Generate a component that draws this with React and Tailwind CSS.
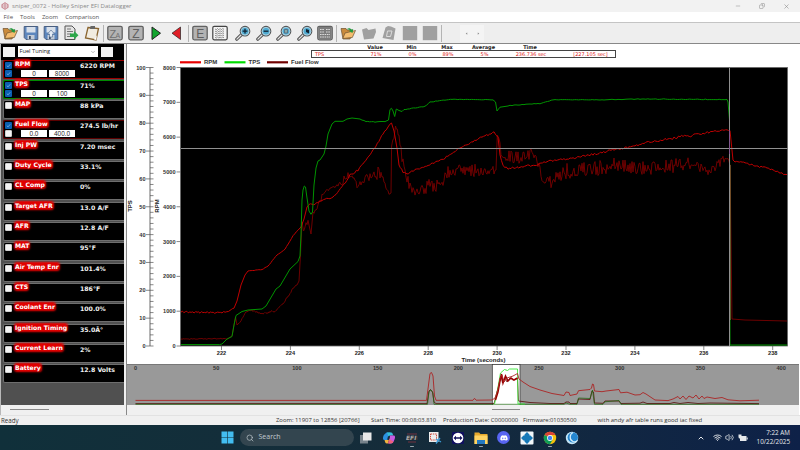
import { Search, ChevronDown, ChevronUp, Wifi, Volume2, Minus, Copy, X } from 'lucide-react';
import { FaDiscord } from 'react-icons/fa';

const channels = [
  { name: 'RPM', value: '6220 RPM', border: 'border-[#9c0000]', checks: [true, true], range: ['0', '8000'] },
  { name: 'TPS', value: '71%', border: 'border-[#008a00]', checks: [true, true], range: ['0', '100'] },
  { name: 'MAP', value: '88 kPa' },
  { name: 'Fuel Flow', value: '274.5 lb/hr', border: 'border-[#5c0000]', checks: [true, false], range: ['0.0', '400.0'] },
  { name: 'Inj PW', value: '7.20 msec' },
  { name: 'Duty Cycle', value: '33.1%' },
  { name: 'CL Comp', value: '0%' },
  { name: 'Target AFR', value: '13.0 A/F' },
  { name: 'AFR', value: '12.8 A/F' },
  { name: 'MAT', value: '95°F' },
  { name: 'Air Temp Enr', value: '101.4%' },
  { name: 'CTS', value: '186°F' },
  { name: 'Coolant Enr', value: '100.0%' },
  { name: 'Ignition Timing', value: '35.0Â°' },
  { name: 'Current Learn', value: '2%' },
  { name: 'Battery', value: '12.8 Volts' },
];

// [x, y, noise amplitude up to this point]
const tps = [
  [181, 344.6, 0], [219.5, 344.6, 0], [222, 344, 0], [227, 339, 0], [232, 336.5, 0], [234, 325, 0], [236, 315.5, 0],
  [242, 311.5, 0], [248, 310, 0], [262, 309, 0], [266, 306, 0], [276, 289, 0], [280, 286, 0], [290, 269, 0],
  [298, 261.5, 0], [300, 256, 0], [301, 235, 0], [302, 200, 0], [303, 190, 0], [304.3, 186, 0], [305.5, 187, 0],
  [307, 198, 0], [309, 211, 0], [311, 214.3, 0], [312.5, 212, 0], [314, 185, 0], [316, 168, 0], [318, 161, 0],
  [320, 160, 0], [324, 154, 0], [326, 146, 0], [328, 134, 0], [332, 124, 0], [335, 121.3, 0], [343, 121.3, 0],
  [347, 119, 0], [352, 118, 0], [360, 119, 0], [366, 121.5, 0.3], [375, 122, 0.3], [385, 121.5, 0.3], [388.5, 120, 0],
  [390, 109.5, 0], [391.5, 108.3, 0], [393, 111, 0], [394.7, 116.5, 0], [396.3, 109, 0], [399, 110.5, 0], [402, 111.5, 0],
  [404, 109.5, 0.3], [425, 106.5, 0.3], [430, 102, 0.2], [445, 100, 0.3], [452, 99.3, 0.2], [493, 99.8, 0.2],
  [495.5, 102, 0], [497, 111, 0], [500, 107, 0.2], [510, 105.5, 0.3], [540, 103.5, 0.3], [553, 99.8, 0.2],
  [600, 99.8, 0.2], [640, 99, 0.3], [727, 99.5, 0.3], [728, 102, 0], [729.5, 120, 0], [730, 345, 0], [787, 345, 0],
];

const rpm = [
  [181, 312, 0], [200, 312.5, 1], [222, 312.5, 1], [230, 311, 0.8], [234, 308, 0.5], [237, 301, 0], [241, 285, 0],
  [245, 275, 0], [248, 271, 0], [262, 269.5, 0.2], [268, 266, 0.2], [277, 255, 0.3], [285, 249, 0.3], [293, 236, 0.3],
  [298, 230, 0.3], [301, 227, 0], [304, 219, 0], [307, 207, 0], [309, 204.5, 0], [315, 204, 0.6], [322, 200, 0.6],
  [333, 197.5, 0.6], [342, 187, 0.6], [350, 175, 1], [358, 170, 1], [366, 160, 0.6], [376, 146, 0.6], [383, 134, 0.8],
  [388, 127, 0.8], [391.5, 122.5, 0.5], [394, 131, 0], [397, 148, 0], [399, 165, 0], [403, 172, 0.6], [407, 174, 0.6],
  [415, 170, 0.8], [431, 164, 0.8], [445, 158, 1], [458, 149, 0.8], [470, 143, 0.8], [482, 137, 0.8], [494, 132.5, 0.8],
  [498, 137, 0.5], [500, 155, 0], [503, 166, 1], [508, 168.5, 1], [520, 167, 1], [535, 165, 1], [550, 161, 1],
  [567, 159, 1], [590, 155, 1], [620, 149, 1.2], [650, 142, 1.1], [680, 137, 1.2], [700, 134, 1.6], [724, 129.5, 1],
  [730, 131, 0.5], [733, 160, 0], [735, 162, 0.5], [745, 162.5, 0.8], [752, 165, 1], [770, 169, 1], [785, 174.5, 0.8], [787, 174.5, 0],
];

const fuel = [
  [181, 339, 0], [228, 338.6, 0.4], [232, 336, 0.3], [235.5, 317, 0], [237, 325, 0], [241, 321, 0.5], [245, 313, 0.5],
  [250, 310, 0.5], [262, 314, 1], [275, 311, 1], [283, 304, 1], [292, 290, 1.2], [299, 282, 1], [300.5, 255, 0],
  [302, 222, 0], [303.5, 231, 0], [306, 221, 2], [309, 223, 3], [311, 234, 0], [313, 212, 0], [316, 210, 2], [320, 200, 3],
  [326, 190, 4], [336, 187, 1.5], [343, 182, 2], [350, 174, 5], [357, 185, 3], [368, 176, 4], [375, 175, 5], [380, 172, 7],
  [386, 186, 3], [389, 194, 2], [391, 193, 0], [391.6, 146, 0], [394, 138, 4], [395.5, 126, 0], [399, 138, 4], [402, 158, 5],
  [406, 177, 5], [412, 188, 6], [419, 193, 6], [428, 186, 6], [442, 184, 7], [448, 172, 6], [465, 170, 6], [480, 171, 7],
  [496, 169, 5], [497.3, 135, 0], [500, 148, 6], [506, 156, 7], [515, 158, 7], [533, 155, 7], [537, 163, 5], [543, 178, 6],
  [550, 181, 6], [562, 176, 8], [567, 171, 8], [590, 170, 8], [615, 165, 8], [650, 169, 7], [680, 165, 7], [690, 163, 8],
  [708, 172, 5], [718, 164, 5], [726, 157, 5], [730, 163, 3], [732, 319, 0], [745, 320, 0], [787, 321, 0],
];

const overviewRpm = [
  [135.5, 400.4], [426.5, 400.4], [428.5, 385], [430, 373.5], [431.5, 372.5], [433, 376], [434.5, 396], [436, 400.3],
  [473, 400.3], [474.5, 398.3], [476, 400.2], [492, 400], [495, 398], [498, 389], [500, 378], [502, 375], [504, 382],
  [507, 378], [510, 377], [513, 376], [517.5, 373.5], [519, 379], [523, 382], [530, 386.5], [540, 390], [552, 393.5],
  [561, 395], [564, 395.5], [566, 392], [569, 392.5], [570, 395.5], [577, 394], [578.5, 390.7], [590, 389.5],
  [591.5, 388], [592.5, 384], [593.5, 384.5], [594.5, 391], [602, 391.7], [606, 391], [619, 389.5], [620.5, 392.8],
  [627, 392.2], [635, 395], [640, 394.7], [643, 392.5], [646, 394], [655, 400], [668, 400.6], [673, 399], [678, 396.5],
  [680, 399], [683, 396], [686, 399.5], [689, 396], [693, 398], [696, 395], [699, 399], [702, 396], [704, 398.500],
  [707, 397], [715, 398.500], [722, 397.500], [728, 399.800], [740, 400.800], [759, 400.200],
];

const overviewFuel = [
  [135.5, 403.6], [427, 403.6], [429, 391], [430.5, 389.5], [432.5, 392], [434, 402], [436, 403.6], [494, 403.6],
  [496, 396], [499, 384], [501, 376], [502.5, 383], [505, 378], [507, 382], [510, 378], [513, 380], [517.5, 378.500],
  [518.5, 401], [530, 402.500], [550, 403.500], [564, 403.5], [566, 402], [569, 402], [570, 403.5], [577, 403.5],
  [578.5, 399], [590, 399.5], [592, 391], [593.5, 392], [594.5, 403], [603, 403.3], [605, 401], [619, 401],
  [621, 403.5], [640, 403.2], [643, 402], [647, 403.5], [670, 403.5], [674, 402.5], [680, 403.5], [688, 402.5],
  [698, 403.5], [710, 403], [759, 403.6],
];

const overviewTps = [
  [135.5, 404.3], [427.5, 404.3], [429, 391.5], [431, 390], [433, 393], [434, 404.3], [564, 404.3], [566, 403],
  [570, 404.3], [577, 404.3], [578.5, 398], [590, 398.500], [592.5, 390], [594.5, 404.3], [603, 404.3], [605, 401.800],
  [619, 400.500], [621, 404.3], [759, 404.3],
];

const toPath = (points) => 'M' + points.map(([x, y]) => `${x} ${y}`).join('L');

const noise = (n) => {
  const s = Math.sin(n * 127.1 + 11.7) * 43758.5453;
  return (s - Math.floor(s)) * 2 - 1;
};

const trace = (points, seed, step = 1) => {
  let d = `M${points[0][0]} ${points[0][1]}`;
  for (let i = 1; i < points.length; i++) {
    const [x0, y0] = points[i - 1];
    const [x1, y1, amp] = points[i];
    const count = amp ? Math.max(1, Math.round((x1 - x0) / step)) : 1;
    for (let k = 1; k <= count; k++) {
      const t = k / count;
      const x = x0 + (x1 - x0) * t;
      const y = y0 + (y1 - y0) * t + noise(x + seed) * amp;
      d += `L${x.toFixed(1)} ${y.toFixed(1)}`;
    }
  }
  return d;
};

const range = (n) => Array.from({ length: n }, (_, i) => i);

const Checkbox = ({ checked }) =>
  checked ? (
    <span className="flex size-[7px] items-center justify-center rounded-[1px] bg-[#0b5fb0]">
      <svg viewBox="0 0 6 6" className="size-[5px]" fill="none" stroke="#9cc8f0" strokeWidth="0.8">
        <path d="M1 3.2 2.5 4.6 5 1.6" />
      </svg>
    </span>
  ) : (
    <span className="size-[7px] rounded-[1px] border border-[#cfcfcf] bg-[#f4f4f4]" />
  );

const Channel = ({ name, value, border = 'border-[#6e6e6e]', checks = [false], range: limits }) => (
  <div className={`ml-[2px] mb-[1.33px] flex h-[19px] shrink-0 rounded-l-[2px] border border-r-0 bg-black pl-[1px] ${border}`}>
    <div className="flex w-[10px] flex-col gap-[1px] pt-[1px]">
      {checks.map((checked, i) => (
        <Checkbox key={i} checked={checked} />
      ))}
    </div>
    <div className="w-[65px]">
      <p className="h-[8px] whitespace-nowrap text-[6.1px] leading-[6px] font-bold text-white">
        <span className="rounded-[2px] bg-[#e00000] shadow-[0_0_2px_1px_#f00000]">{name}</span>
      </p>
      {limits && (
        <div className="flex gap-[2px] pl-[6px] pt-[1px] font-['Open_Sans',sans-serif] text-[6.3px] leading-[7px] text-[#222]">
          <span className="w-[26px] bg-white text-center">{limits[0]}</span>
          <span className="w-[26px] bg-white text-center">{limits[1]}</span>
        </div>
      )}
    </div>
    <span className="pt-[1px] whitespace-nowrap text-[6.2px] leading-[7px] font-bold text-[#f0f0f0]">{value}</span>
  </div>
);

const Tool = ({ children }) => (
  <span className="flex w-[20.4px] justify-center">
    <svg viewBox="0 0 16 16" className="size-[16px]" fill="none">
      {children}
    </svg>
  </span>
);

const Divider = () => <span className="mx-[1px] h-[17px] w-px bg-[#b4b4b4]" />;

const Folder = () => (
  <Tool>
    <path d="M1 3.5h5l1 1.5h5.500v3L10 14H3z" fill="#c98a3c" stroke="#6b5030" strokeWidth="0.7" />
    <path d="M2.800 13.500 5 8l10.500-2.500-3.200 7z" fill="#f4bd70" stroke="#6b5030" strokeWidth="0.7" />
    <path d="M6.500 4.500c2-2 4-1.500 5 .2l1.700-.7-.7 4-3.500-2 1.200-.6c-1-1-2.200-1.200-3.700-.9z" fill="#1f9a3d" />
  </Tool>
);

const Floppy = ({ up }) => (
  <Tool>
    <path d="M1.200 1.500h13.600v13H3L1.200 12.500z" fill="#5c86bd" stroke="#4a5f80" />
    <path d="M3.500 2h9v5.500h-9z" fill="#d8e0ea" />
    <path d="M4.500 10h7v4.500h-7z" fill="#c3cbd6" />
    <path d="M6 11h1.800v3H6z" fill="#44546c" />
    {up && <path d="M8 5 11.500 9H9.500v3h-3V9h-2z" fill="#e4ebf4" stroke="#5d7596" strokeWidth="0.7" />}
  </Tool>
);

const Gray = ({ children }) => (
  <Tool>
    <rect x="0.800" y="1.300" width="14.400" height="13.500" rx="1.500" fill="#b3b3b3" stroke="#626262" strokeWidth="1.300" />
    {children}
  </Tool>
);

const Zoom = ({ children }) => (
  <Tool>
    <path d="M6.600 9.500 1.800 14.200" stroke="#555" strokeWidth="3.200" strokeLinecap="round" />
    <path d="M6.300 9.800 1.900 14.100" stroke="#e4e4e4" strokeWidth="1.300" strokeLinecap="round" />
    <circle cx="10" cy="6.200" r="4.800" fill="#4ea9cf" stroke="#555" strokeWidth="1.100" />
    <circle cx="10" cy="6.200" r="3.900" stroke="#c5dbe5" strokeWidth="0.800" />
    {children}
  </Tool>
);

const Toolbar = () => (
  <div className="flex h-[21px] items-center border-t border-[#c4c4c4] bg-[#eeeeee]">
    <Folder />
    <Floppy />
    <Floppy up />
    <Tool>
      <path d="M2 1h7l3 3v10.500H2z" fill="#e4e4e4" stroke="#555" />
      <path d="M4 4h4M4 6.500h6M4 9h4M4 11.500h4" stroke="#777" />
      <path d="M7 8.500h4V6l4.500 4.200L11 14.500V12H7z" fill="#2da84c" />
    </Tool>
    <Tool>
      <path d="M4 2.500 14.500 3.500 12 15 1.500 13z" fill="#f1ece0" stroke="#8a6530" strokeWidth="1.300" />
      <path d="M6.500 1h4.500v3H6z" fill="#666" />
      <path d="M10 14.500 13 10l-.800 5z" fill="#fff" />
    </Tool>
    <Divider />
    <Gray>
      <text x="2.500" y="12.500" fontSize="11" fill="#707070" fontFamily="Liberation Sans">Z</text>
      <text x="8.500" y="12.500" fontSize="7" fill="#707070" fontFamily="Liberation Sans">A</text>
    </Gray>
    <Gray>
      <text x="4.300" y="12.500" fontSize="12" fill="#606060" fontFamily="Liberation Sans">Z</text>
    </Gray>
    <Tool>
      <path d="M4 2v12.500L12.500 8.200z" fill="#12a52f" stroke="#222" />
    </Tool>
    <Tool>
      <path d="M12.500 2v12.500L4 8.200z" fill="#e01f28" stroke="#222" strokeWidth="0.700" />
    </Tool>
    <Divider />
    <Gray>
      <text x="4.300" y="12.700" fontSize="12" fill="#606060" fontFamily="Liberation Sans">E</text>
    </Gray>
    <Tool>
      <rect x="0.800" y="1.300" width="14.400" height="13.500" rx="1.500" fill="#f4f4f4" stroke="#444" strokeWidth="1.200" />
      {range(5).map((i) => (
        <path key={i} d={`M3 ${3.8 + i * 2.1}l1.2 1 1.3-1.3 1.3 1.3 1.3-1.3 1.3 1.3 1.3-1.3 1.3 1`} stroke="#666" strokeWidth="0.7" />
      ))}
    </Tool>
    <span className="w-[3px]" />
    <Zoom>
      <path d="M10 3.800v4.800M7.600 6.200h4.800" stroke="#123" strokeWidth="1.300" />
    </Zoom>
    <Zoom>
      <path d="M7.600 6.200h4.800" stroke="#123" strokeWidth="1.300" />
    </Zoom>
    <Zoom>
      <path d="M8.500 4.500h3v3.500h-3z" fill="#8aa" stroke="#567" strokeWidth="0.800" />
    </Zoom>
    <Zoom>
      <path d="M9 4v3l3 1.500V5z" fill="#123" />
    </Zoom>
    <Gray>
      <path d="M1.500 2h13v12h-13z" fill="#7c7c7c" />
      <path d="M3 4.500h4M9 4.500h4M3 7h4M9 7h4M3 9.500h10M3 12h10" stroke="#ddd" strokeDasharray="1.600 0.700" />
    </Gray>
    <Divider />
    <Folder />
    <Tool>
      <path d="M1 4.500 5.500 3l2 2 7-1.500.500 3.500-2.500 6.500L3 14.500z" fill="#a0a0a0" />
    </Tool>
    <Tool>
      <path d="M4.500 2.500 7 1l3 .500 4.500 2L12.500 15 1.500 13z" fill="#a0a0a0" />
      <path d="M6.500 6h4.500l-1.500 5.500h-4z" stroke="#dcdcdc" />
    </Tool>
    <Tool>
      <path d="M0.800 1h14.400v14.200H0.800z" fill="#a0a0a0" />
    </Tool>
    <Tool>
      <path d="M0.800 1h14.400v14.200H0.800z" fill="#a0a0a0" />
    </Tool>
    <Divider />
    <span className="ml-[17px] flex h-[17px] w-[24px] items-center justify-around bg-[#f4f4f4]">
      <svg viewBox="0 0 4 4" className="size-[3px]"><path d="M3 .5v3L1 2z" fill="#888" /></svg>
      <svg viewBox="0 0 4 4" className="size-[3px]"><path d="M1 .5v3L3 2z" fill="#888" /></svg>
    </span>
  </div>
);

const Sidebar = () => (
  <aside className="flex w-[124px] shrink-0 flex-col overflow-hidden border-l border-[#b8b8b8] bg-[#505050] font-['DejaVu_Sans',sans-serif]">
    <div className="flex h-[15.500px] shrink-0 items-center bg-black pl-[2px]">
      <span className="h-[10px] w-[12px] bg-[#f2f2f2]" />
      <span className="ml-[2.500px] flex h-[11px] w-[80px] items-center justify-between bg-white px-[2px] font-['Open_Sans',sans-serif] text-[5.700px] text-[#222]">
        Fuel Tuning
        <ChevronDown size={6} color="#777" />
      </span>
      <span className="ml-[3.500px] h-[10px] w-[11.500px] bg-[#f2f2f2]" />
    </div>
    {channels.map((channel) => (
      <Channel key={channel.name} {...channel} />
    ))}
    <div className="flex-1" />
    <div className="h-[10px] bg-[#f0f0f0] pt-[4px] pl-[9px]">
      <div className="h-px w-[39px] bg-[#8a8a8a]" />
    </div>
  </aside>
);

const StatsTable = () => (
  <div className="ml-[184px] w-[305px] font-['DejaVu_Sans',sans-serif] text-[5px]">
    <div className="grid h-[6px] grid-cols-[40px_48px_25px_46px_27px_66px_53px] text-center leading-[6px] font-bold text-[#222]">
      <span />
      <span>Value</span>
      <span>Min</span>
      <span>Max</span>
      <span>Average</span>
      <span>Time</span>
    </div>
    <div className="grid h-[8px] grid-cols-[40px_48px_25px_46px_27px_66px_53px] border border-[#444] text-center leading-[6px] text-[#e02020]">
      <span className="pl-[3px] text-left">TPS</span>
      <span>71%</span>
      <span>0%</span>
      <span>89%</span>
      <span>5%</span>
      <span>236.736 sec</span>
      <span className="whitespace-nowrap">[227.105 sec]</span>
    </div>
  </div>
);

const legend = [
  { name: 'RPM', x: 180, color: '#e80000' },
  { name: 'TPS', x: 224.5, color: '#00dc00' },
  { name: 'Fuel Flow', x: 267, color: '#700000' },
];

const Chart = () => (
  <svg viewBox="127 59 672 305" className="h-[305px] w-[672px]" fill="none" fontFamily="Liberation Sans" fontWeight="bold">
    {legend.map((item) => (
      <g key={item.name}>
        <path d={`M${item.x} 62.3h21`} stroke={item.color} strokeWidth="2.2" />
        <text x={item.x + 24} y="64.300" fontSize="6" fill="#333">{item.name}</text>
      </g>
    ))}

    <path d="M150 67.500V346" stroke="#444" strokeWidth="0.800" />
    {range(51).map((i) => (
      <path key={i} d={i % 5 ? `M150 ${346 - i * 5.57}h3.5` : `M146 ${346 - i * 5.57}h7.5`} stroke="#555" strokeWidth="0.7" />
    ))}
    {range(11).map((i) => (
      <text key={i} x="145.500" y={348 - i * 27.85} fontSize="5.600" fill="#333" textAnchor="end">{i * 10}</text>
    ))}
    {range(9).map((i) => (
      <g key={i}>
        <path d={`M176.5 ${346 - i * 34.81}h4`} stroke="#555" strokeWidth="0.7" />
        <text x="175.500" y={348 - i * 34.81} fontSize="5.600" fill="#333" textAnchor="end">{i * 1000}</text>
      </g>
    ))}
    <text transform="translate(131.500 206) rotate(-90)" fontSize="6" fill="#111" textAnchor="middle">TPS</text>
    <text transform="translate(158.500 206) rotate(-90)" fontSize="6" fill="#111" textAnchor="middle">RPM</text>

    <rect x="180.500" y="67.500" width="607" height="278.500" fill="#000" stroke="#666" strokeWidth="0.800" />
    <path d={trace(fuel, 3)} stroke="#780000" strokeWidth="0.900" />
    <path d={trace(rpm, 9, 1.5)} stroke="#c00000" strokeWidth="1" />
    <path d={trace(tps, 5, 2)} stroke="#009400" strokeWidth="1" />
    <path d="M181 148.500h606.500" stroke="#909090" />
    <path d="M729.500 68v278" stroke="#909090" />
    <path d="M729.500 130v24" stroke="#804a90" strokeWidth="0.800" />
    <path d="M730.500 165v155" stroke="#8a7040" strokeWidth="0.600" />

    {range(9).map((i) => (
      <g key={i}>
        <path d={`M${221.5 + i * 68.9} 346v4`} stroke="#555" strokeWidth="0.7" />
        <text x={221.5 + i * 68.9} y="355" fontSize="5.600" fill="#222" textAnchor="middle">{222 + i * 2}</text>
      </g>
    ))}
    <text x="483.500" y="362.300" fontSize="6" fill="#222" textAnchor="middle">Time (seconds)</text>
  </svg>
);

const Overview = () => (
  <svg viewBox="127 364 672 41" className="h-[41px] w-[672px] bg-[#999999]" fill="none" fontFamily="Liberation Sans" fontWeight="bold">
    <path d="M127 364.300h672" stroke="#666" strokeWidth="0.800" />
    <rect x="492.300" y="364.500" width="27.700" height="41" fill="#fff" stroke="#333" strokeWidth="0.700" />
    {range(9).map((i) => (
      <text key={i} x={135.5 + i * 80.7} y="370" fontSize="5.600" fill="#333" textAnchor="middle">{i * 50}</text>
    ))}
    <path d={toPath(overviewFuel)} stroke="#5a0808" strokeWidth="0.800" />
    <path d={toPath(overviewTps)} stroke="#1c6a10" strokeWidth="0.700" />
    <path
      d="M494.500 404 497.500 390 500.500 373 504.500 369.500 507.500 370.500 509.500 369H517.500L518 404H525"
      stroke="#39e839"
      strokeWidth="0.900"
    />
    <path
      d="M495.500 400 498 392 500 381 501.500 374 503 383 505.500 376 508 381 511 378 514 380 517.500 378"
      stroke="#9a0000"
      strokeWidth="1.500"
    />
    <path d={toPath(overviewRpm)} stroke="#ab2424" strokeWidth="0.900" />
  </svg>
);

const StatusBar = () => (
  <div className="flex h-[10px] shrink-0 items-center whitespace-nowrap border-t border-[#e2e2e2] bg-[#f0f0f0] pl-[1px] font-['Open_Sans',sans-serif] text-[5.900px] text-[#333]">
    <span className="w-[275px] text-[6.200px]">Ready</span>
    <span className="w-[95px]">Zoom: 11907 to 12856 [20766]</span>
    <span className="w-[72px] text-[5.800px]">Start Time: 00:08:03.810</span>
    <span className="w-[80px]">Production Date: C0000000</span>
    <span className="w-[74.500px] text-[5.800px]">Firmware:01030500</span>
    <span>with andy afr table runs good iac fixed</span>
  </div>
);

const TaskIcon = ({ children, active }) => (
  <span className="relative flex h-full w-[22.900px] items-center justify-center">
    <svg viewBox="0 0 14 14" className="size-[14px]" fill="none">{children}</svg>
    {active && <span className="absolute bottom-[3px] h-px w-[4px] rounded bg-[#9aa5ad]" />}
  </span>
);

const Taskbar = () => (
  <footer className="flex h-[25px] shrink-0 items-center bg-linear-to-r from-[#10303a] via-[#152c3a] to-[#0e2148] pl-[220.500px] font-['Open_Sans',sans-serif] text-[#e6e9ec]">
    <svg viewBox="0 0 13 13" className="size-[13px]" fill="#43bdf0">
      <path d="M.5.5h5.700v5.700H.5zM6.800.5h5.700v5.700H6.800zM.5 6.800h5.700v5.700H.5zM6.800 6.800h5.700v5.700H6.800z" />
    </svg>
    <div className="ml-[6.500px] flex h-[17px] w-[114px] items-center gap-[4.500px] rounded-full bg-[#33454f] pl-[6px] text-[7px] text-[#c3cbd0]">
      <Search size={8} />
      Search
    </div>
    <div className="ml-[1px] flex h-full">
      <TaskIcon>
        <path d="M1 4h8v8.500H1z" fill="#77828a" />
        <path d="M4 1.500h8.500v8H4z" fill="#e8e8e8" />
      </TaskIcon>
      <TaskIcon>
        <path d="M4.500 1.500h4L5.500 9H2.500C.3 9 .8 6.500 1.800 4z" fill="#2b91e0" />
        <path d="M4.800 1.500H9c1.700 0 1.700 1.500 2.200 3H8L6.500 5z" fill="#36c2d8" />
        <path d="M8 4.500h3.500c2.200 0 1.700 2.500.8 4.500-1 2.500-1.500 3.500-3.800 3.500H6.500z" fill="#c65be0" />
        <path d="M2.500 9h3L7 8.800 5.800 12.500H5c-1.700 0-2-1.700-2.500-3.500z" fill="#f2b340" />
        <path d="M7.200 8 6 12.500h3c1.200 0 2-1 2.500-2z" fill="#f0607c" />
        <path d="M6 5.300h2L7 8.500H5.200z" fill="#173040" />
      </TaskIcon>
      <TaskIcon active>
        <path d="M2 3h10M3 11h8" stroke="#8e3440" strokeWidth="0.800" />
        <path d="M1 5h12v4H1z" fill="#2b3138" />
        <text x="1" y="9" fontSize="6" fontWeight="bold" fontStyle="italic" fill="#a9a9a9" fontFamily="DejaVu Sans">EFI</text>
      </TaskIcon>
      <TaskIcon>
        <rect x="1" y="1" width="9.500" height="10" fill="#eee" />
        <rect x="2.500" y="3" width="6" height="6" stroke="#d04a3c" strokeDasharray="1.500 0.800" />
        <path d="M8 12.500 12 7M8 8l5 3" stroke="#3d9bd6" strokeWidth="1.300" />
      </TaskIcon>
      <TaskIcon>
        <rect x="1" y="1" width="12" height="12" rx="1" fill="#101060" />
        <circle cx="7" cy="7" r="5.300" fill="#fff" />
        <path d="M2.500 7 5 4.800v1.500h4V4.800L11.500 7 9 9.200V7.700H5v1.500z" fill="#14145c" />
      </TaskIcon>
      <TaskIcon active>
        <path d="M.5 1.500h4.500l1.500 1.500h7v10H.5z" fill="#e7a92c" />
        <path d="M.5 4.500h13V13H.5z" fill="#ffd463" />
        <path d="M3 9h8v4H3z" fill="#2479c2" />
      </TaskIcon>
      <span className="flex w-[22.900px] items-center justify-center">
        <span className="flex size-[13px] items-center justify-center rounded-full bg-[#5865f2]">
          <FaDiscord size={8} color="#fff" />
        </span>
      </span>
      <TaskIcon>
        <rect x="0.500" y="0.500" width="13" height="13" rx="1" fill="#f2f7fa" />
        <path d="M7 1 9.500 3.500v1h1L13 7l-2.500 2.500h-1v1L7 13l-2.500-2.500v-1h-1L1 7l2.500-2.500h1v-1z" fill="#1679b8" />
      </TaskIcon>
      <TaskIcon active>
        <circle cx="7" cy="7" r="6.200" fill="#f4c20d" />
        <path d="M7 7 1.600 3.900A6.200 6.200 0 0 1 12.400 3.900H7z" fill="#db4437" />
        <path d="M7 7 1.600 3.900A6.200 6.200 0 0 0 7 13.200L9.500 9z" fill="#0f9d58" />
        <circle cx="7" cy="7" r="2.900" fill="#fff" />
        <circle cx="7" cy="7" r="2.200" fill="#4285f4" />
      </TaskIcon>
      <TaskIcon>
        <circle cx="7" cy="7" r="6.200" fill="#c4e6f8" />
        <circle cx="7.800" cy="6.400" r="5.200" fill="#2486d0" />
        <path d="M8 1.500C4.500 3 4 9 8 10.500c2 .7 3.500 0 4.500-1.200" stroke="#d3ecfa" strokeWidth="1.200" />
      </TaskIcon>
    </div>
    <div className="ml-auto flex items-center pr-[10px]">
      <ChevronUp size={8} strokeWidth={3} className="mr-[8px]" />
      <Wifi size={9} strokeWidth={2.5} className="mr-[3px]" />
      <Volume2 size={9} className="mr-[4px]" />
      <svg viewBox="0 0 10 8" className="mr-[9px] h-[8px] w-[10px]" fill="#e6e9ec">
        <path d="M2 2h6.500v5H2zM8.800 3.500h.9v2h-.9z" />
        <path d="M.5.5h3v2.500a1.500 1.500 0 0 1-3 0z" />
      </svg>
      <div className="text-right text-[6.300px] leading-[8.500px]">
        <p>7:22 AM</p>
        <p>10/22/2025</p>
      </div>
    </div>
  </footer>
);

export default function App() {
  return (
    <div className="flex h-[450px] w-[800px] flex-col overflow-hidden bg-white">
      <header className="flex h-[12px] shrink-0 items-center bg-[#f2f2f2] pl-[1px] font-['Open_Sans',sans-serif] text-[6.100px] text-[#8a8a8a]">
        <svg viewBox="0 0 8 8" className="mr-[3px] size-[8px]" fill="none" stroke="#c47a84" strokeWidth="0.700">
          <circle cx="4" cy="4" r="3" />
          <path d="M4 0v8M0 3h8M0 5h8" />
        </svg>
        sniper_0072 - Holley Sniper EFI Datalogger
        <div className="ml-auto flex gap-[18px] pr-[10px]">
          <Minus size={6} />
          <Copy size={6} className="-scale-x-100" />
          <X size={7} />
        </div>
      </header>
      <nav className="flex h-[10px] shrink-0 items-center gap-[7px] pl-[3.500px] font-['Open_Sans',sans-serif] text-[6px] text-[#555]">
        <span>File</span>
        <span>Tools</span>
        <span>Zoom</span>
        <span>Comparison</span>
      </nav>
      <Toolbar />
      <main className="flex h-[372px] shrink-0 border-t border-[#888]">
        <Sidebar />
        <div className="w-[3px] border-r border-[#888] bg-[#f0f0f0]" />
        <section className="flex w-[672px] flex-col bg-white">
          <div className="h-[15px] shrink-0">
            <StatsTable />
          </div>
          <Chart />
          <Overview />
          <div className="h-[10px] bg-[#f0f0f0] pt-[4px] pl-[365px]">
            <div className="h-px w-[28px] bg-[#8a8a8a]" />
          </div>
        </section>
      </main>
      <StatusBar />
      <Taskbar />
    </div>
  );
}
